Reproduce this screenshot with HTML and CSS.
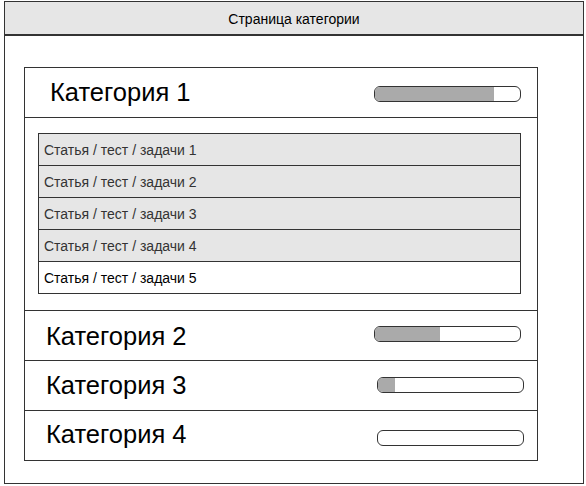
FILE: index.html
```html
<!DOCTYPE html>
<html lang="ru">
<head>
<meta charset="utf-8">
<title>Страница категории</title>
<link rel="stylesheet" href="styles.css">
</head>
<body>
<div class="frame">
  <div class="topbar">Страница категории</div>
  <div class="content">
    <div class="cats">
      <div class="cat cat-open">
        <div class="cat-head head-1">
          <span class="cat-title">Категория 1</span>
          <div class="bar"><div class="fill" style="width:82%"></div></div>
        </div>
        <div class="cat-body">
          <div class="list">
            <div class="item done">Статья / тест / задачи 1</div>
            <div class="item done">Статья / тест / задачи 2</div>
            <div class="item done">Статья / тест / задачи 3</div>
            <div class="item done">Статья / тест / задачи 4</div>
            <div class="item">Статья / тест / задачи 5</div>
          </div>
        </div>
      </div>
      <div class="cat">
        <div class="cat-head head-2">
          <span class="cat-title">Категория 2</span>
          <div class="bar"><div class="fill" style="width:45%"></div></div>
        </div>
      </div>
      <div class="cat">
        <div class="cat-head head-3">
          <span class="cat-title">Категория 3</span>
          <div class="bar"><div class="fill" style="width:12%"></div></div>
        </div>
      </div>
      <div class="cat">
        <div class="cat-head head-4">
          <span class="cat-title">Категория 4</span>
          <div class="bar"><div class="fill" style="width:0%"></div></div>
        </div>
      </div>
    </div>
  </div>
</div>
</body>
</html>
```

FILE: styles.css
```css
* { box-sizing: border-box; }
html, body { margin: 0; padding: 0; background: #fff; }
body { font-family: "Liberation Sans", Arial, sans-serif; color: #000; }

.frame {
  margin: 1px 0 0 4px;
  width: 580px;
  height: 483px;
  border: 1px solid #333;
  display: flex;
  flex-direction: column;
}

.topbar {
  height: 34px;
  background: #e6e6e6;
  border-bottom: 2px solid #333;
  display: flex;
  align-items: center;
  justify-content: center;
  font-size: 14px;
  padding-top: 1px;
}

.content {
  padding: 31px 0 0 19px;
}

.cats {
  width: 514px;
  border: 1px solid #333;
}

.cat + .cat { border-top: 1px solid #333; }

.cat-head {
  height: 49px;
  display: flex;
  align-items: center;
  justify-content: space-between;
}

.cat-open .cat-head { height: 50px; border-bottom: 1px solid #333; }

.cat-title { font-size: 25.5px; line-height: 28px; }

.head-1 { padding: 0 16px 0 25px; }
.head-1 .cat-title { margin-top: -2px; }
.head-1 .bar { margin-top: 2px; }
.head-2 { padding: 0 16px 0 21px; }
.head-2 .bar { margin-top: -4px; }
.head-3 { padding: 0 13px 0 21px; }
.head-3 .cat-title { margin-top: -2px; }
.head-3 .bar { margin-top: -1px; }
.head-4 { padding: 0 13px 0 21px; }
.head-4 .cat-title { margin-top: -4px; }
.head-4 .bar { margin-top: 4px; }

.bar {
  width: 147px;
  height: 16px;
  border: 1px solid #333;
  border-radius: 6px;
  background: #fff;
  overflow: hidden;
}

.fill {
  height: 100%;
  background: #aaaaaa;
}

.cat-body {
  padding: 15px 16px 16px 13px;
}

.list {
  width: 483px;
  border: 1px solid #333;
}

.item {
  height: 32px;
  display: flex;
  align-items: center;
  padding-left: 5px;
  font-size: 14px;
  color: #000;
  background: #fff;
}

.item:first-child { height: 31px; }

.item + .item { border-top: 1px solid #333; }

.item.done { background: #e6e6e6; color: #333; }
```
